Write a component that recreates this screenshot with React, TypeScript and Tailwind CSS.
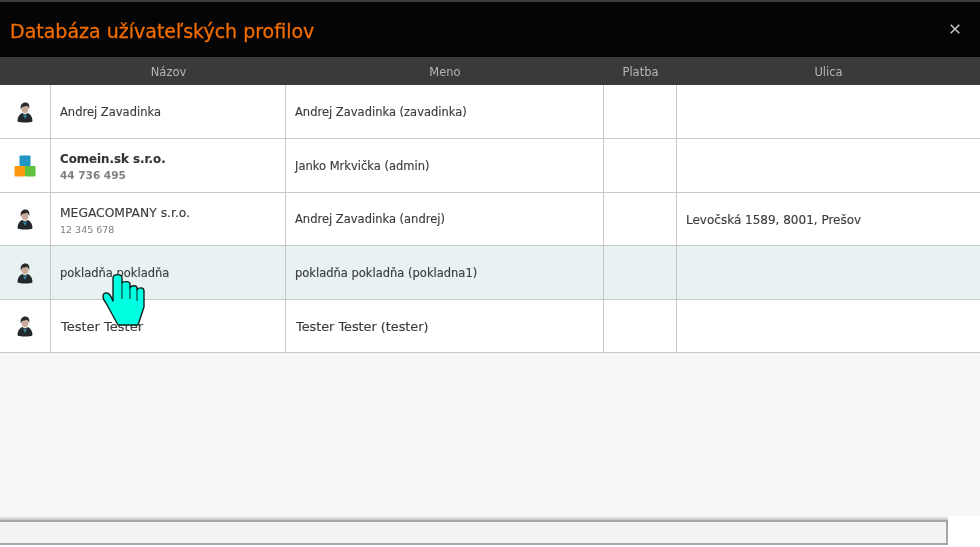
const font = "[font-family:'DejaVu_Sans',sans-serif]";

type Row = {
  icon: "person" | "blocks";
  name: string;
  sub?: string;
  bold?: boolean;
  login: string;
  street?: string;
  hover?: boolean;
  height: string;
  nameClass?: string;
  loginClass?: string;
};

const rows: Row[] = [
  { icon: "person", name: "Andrej Zavadinka", login: "Andrej Zavadinka (zavadinka)", height: "h-[54px]" },
  { icon: "blocks", name: "Comein.sk s.r.o.", sub: "44 736 495", bold: true, login: "Janko Mrkvička (admin)", height: "h-[54px]", nameClass: "text-[11.800px]" },
  {
    icon: "person",
    name: "MEGACOMPANY s.r.o.",
    sub: "12 345 678",
    login: "Andrej Zavadinka (andrej)",
    street: "Levočská 1589, 8001, Prešov",
    height: "h-[53px]",
    nameClass: "text-[12.300px]",
  },
  { icon: "person", name: "pokladňa pokladňa", login: "pokladňa pokladňa (pokladna1)", hover: true, height: "h-[54px]" },
  {
    icon: "person",
    name: "Tester Tester",
    login: "Tester Tester (tester)",
    height: "h-[53px]",
    nameClass: "text-[13px] ml-[1px]",
    loginClass: "text-[12.800px] pl-[10px]",
  },
];

function PersonIcon() {
  return (
    <svg className="mt-[2px]" width="16" height="22" viewBox="0 0 16 22" aria-hidden="true">
      <path d="M5 11C2.500 12.500.5 15 .5 19c0 2 15 2 15 0 0-4-2-6.500-4.500-8l-3 1.500z" fill="#23282c" />
      <path d="M5.800 12.500 8 17l2.200-4.500L8 13.500z" fill="#2f8aa3" />
      <ellipse cx="8" cy="6.500" rx="3.600" ry="5" fill="#c9ac9c" />
      <path d="M3.800 7.500C3 2.500 5.500.5 8.200.5c3 0 4.800 2 4 6.500-.5-1.800-1.200-2.800-2.400-3.300-1.500.7-3 .9-4.300 1-.8.600-1.300 1.500-1.700 2.800z" fill="#2a2a2a" />
    </svg>
  );
}

function BlocksIcon() {
  return (
    <svg width="22" height="22" viewBox="0 0 22 22" aria-hidden="true">
      <rect x="5.500" y="0.500" width="11" height="11" rx="1" fill="#2196c4" />
      <rect x="0.500" y="11" width="10.500" height="10.500" rx="1" fill="#fb9a0e" />
      <rect x="11" y="11" width="10.500" height="10.500" rx="1" fill="#5cc13c" />
    </svg>
  );
}

function HandCursor() {
  return (
    <svg
      className="absolute left-[100px] top-[273px]"
      width="46"
      height="54"
      viewBox="0 0 46 54"
      aria-hidden="true"
    >
      <path
        d="M18 52 6 30C1 24 3 19 7 20c2 0 4 3 6 8V5c0-4.500 9-4.500 9 0v5c1-2 8-2 8 1v4c1-3 7-3 7 0v2c1-3 7-3 7 1v16l-6 18z"
        fill="#00ffe0"
        stroke="#10201e"
        strokeWidth="1.400"
        strokeLinejoin="round"
      />
      <path d="M22 10v16M30 15v11M37 17v11" stroke="#10201e" strokeWidth="1" fill="none" />
    </svg>
  );
}

export default function App() {
  const grid = "grid grid-cols-[51px_235px_318px_73px_1fr]";

  return (
    <div className={`relative flex h-[547px] w-[980px] flex-col overflow-hidden bg-white blur-[0.4px] ${font}`}>
      <div className="flex h-[57px] shrink-0 items-center justify-between border-t-2 border-[#3c3c3c] bg-[#050505] pl-[10px] pr-[20px]">
        <h1 className="pt-[3px] text-[19px] leading-none text-[#f06c00] [-webkit-text-stroke:0.3px_#f06c00]">
          Databáza užívateľských profilov
        </h1>
        <svg className="mb-[2px]" width="10" height="10" viewBox="0 0 10 10" aria-label="Zavrieť">
          <path d="M.7.7l8.600 8.600M9.300.7.7 9.300" stroke="#c8c8c8" strokeWidth="1.500" />
        </svg>
      </div>

      <div className={`${grid} h-[28px] shrink-0 items-center bg-[#3a3a3a] pt-[4px] text-center text-[11.500px] text-[#b4b4b4]`}>
        <span />
        <span>Názov</span>
        <span>Meno</span>
        <span>Platba</span>
        <span>Ulica</span>
      </div>

      <div className="shrink-0 text-[11.500px] text-[#3c3c3c] [-webkit-text-stroke:0.15px_#3c3c3c]">
        {rows.map((row) => (
          <div
            key={row.login}
            className={`${grid} ${row.height} border-b border-[#c8c8c8] ${row.hover ? "bg-[#e9f2f2]" : "bg-white"}`}
          >
            <div className="flex items-center justify-center border-r border-[#c8c8c8]">
              {row.icon === "person" ? <PersonIcon /> : <BlocksIcon />}
            </div>
            <div className="flex flex-col justify-center border-r border-[#c8c8c8] pl-[9px] pt-[2px]">
              <span className={`${row.bold ? "font-bold text-[#333333]" : ""} ${row.nameClass ?? ""}`}>{row.name}</span>
              {row.sub && (
                <span className={`text-[9.500px] leading-[13px] text-[#808080] [-webkit-text-stroke:0px] ${row.bold ? "text-[10.500px] font-bold" : ""}`}>
                  {row.sub}
                </span>
              )}
            </div>
            <div className={`flex items-center border-r border-[#c8c8c8] pl-[9px] pt-[2px] ${row.loginClass ?? ""}`}>{row.login}</div>
            <div className="border-r border-[#c8c8c8]" />
            <div className="flex items-center pl-[9px] pt-[1px] text-[12px]">{row.street}</div>
          </div>
        ))}
      </div>

      <div className="flex flex-1 flex-col bg-white">
        <div className="h-[163px] bg-[#f7f7f7]" />
        <div className="h-[4px] w-[948px] bg-gradient-to-b from-[#f7f7f7] to-[#c4c4c4]" />
        <div className="h-[25px] w-[948px] border-y-2 border-r-2 border-[#a6a6a6] bg-[#f3f3f3]" />
      </div>

      <HandCursor />
    </div>
  );
}
